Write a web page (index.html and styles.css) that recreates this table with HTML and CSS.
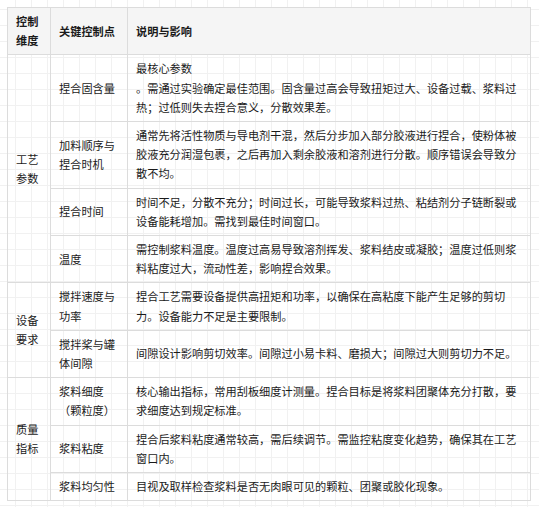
FILE: index.html
```html
<!DOCTYPE html>
<html lang="zh-CN">
<head>
<meta charset="utf-8">
<link rel="stylesheet" href="styles.css">
</head>
<body>
<div class="page">
<table class="ctrl">
  <colgroup>
    <col class="c1"><col class="c2"><col class="c3">
  </colgroup>
  <thead>
    <tr><th>控制维度</th><th>关键控制点</th><th>说明与影响</th></tr>
  </thead>
  <tbody>
    <tr><td rowspan="4">工艺参数</td><td>捏合固含量</td><td>最核心参数<br>。需通过实验确定最佳范围。固含量过高会导致扭矩过大、设备过载、浆料过热；过低则失去捏合意义，分散效果差。</td></tr>
    <tr><td>加料顺序与捏合时机</td><td>通常先将活性物质与导电剂干混，然后分步加入部分胶液进行捏合，使粉体被胶液充分润湿包裹，之后再加入剩余胶液和溶剂进行分散。顺序错误会导致分散不均。</td></tr>
    <tr><td>捏合时间</td><td>时间不足，分散不充分；时间过长，可能导致浆料过热、粘结剂分子链断裂或设备能耗增加。需找到最佳时间窗口。</td></tr>
    <tr><td>温度</td><td>需控制浆料温度。温度过高易导致溶剂挥发、浆料结皮或凝胶；温度过低则浆料粘度过大，流动性差，影响捏合效果。</td></tr>
    <tr><td rowspan="2">设备要求</td><td>搅拌速度与功率</td><td>捏合工艺需要设备提供高扭矩和功率，以确保在高粘度下能产生足够的剪切力。设备能力不足是主要限制。</td></tr>
    <tr><td>搅拌桨与罐体间隙</td><td>间隙设计影响剪切效率。间隙过小易卡料、磨损大；间隙过大则剪切力不足。</td></tr>
    <tr><td rowspan="3">质量指标</td><td>浆料细度（颗粒度）</td><td>核心输出指标，常用刮板细度计测量。捏合目标是将浆料团聚体充分打散，要求细度达到规定标准。</td></tr>
    <tr><td>浆料粘度</td><td>捏合后浆料粘度通常较高，需后续调节。需监控粘度变化趋势，确保其在工艺窗口内。</td></tr>
    <tr><td>浆料均匀性</td><td>目视及取样检查浆料是否无肉眼可见的颗粒、团聚或胶化现象。</td></tr>
  </tbody>
</table>
</div>
</body>
</html>
```

FILE: styles.css
```css
html, body {
  margin: 0;
  padding: 0;
}
body {
  background-color: #ffffff;
  background-image:
    linear-gradient(to right, #f1f1f1 1px, transparent 1px),
    linear-gradient(to bottom, #f1f1f1 1px, transparent 1px);
  background-size: 16px 16px;
  background-position: 15px 9px;
  min-height: 507px;
  font-family: "Noto Sans CJK SC", "Noto Sans", sans-serif;
  font-size: 11.2px;
  color: #1a1a1a;
}
.page {
  padding: 7px;
}
.ctrl {
  border-collapse: collapse;
  table-layout: fixed;
  width: 523px;
}
.c1 { width: 43px; }
.c2 { width: 77px; }
.c3 { width: 403px; }
.ctrl th,
.ctrl td {
  border: 1px solid #dcdcdc;
  padding: 4px 8px;
  line-height: 19.2px;
  vertical-align: middle;
  text-align: left;
  word-break: normal;
}
.ctrl th {
  background: #f5f5f5;
  font-weight: bold;
}
```
